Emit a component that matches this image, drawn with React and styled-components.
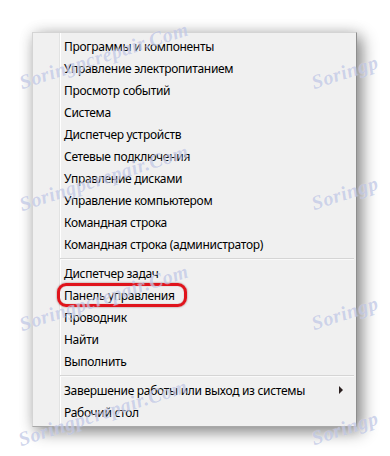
import React from 'react';
import styled, { createGlobalStyle } from 'styled-components';

const GlobalStyle = createGlobalStyle`
    html, body {
        margin: 0;
        padding: 0;
        background-color: #ffffff;
    }
`;

const Page = styled.div`
    position: relative;
    width: 390px;
    height: 456px;
    padding: 32px 0 0 32px;
    box-sizing: border-box;
    overflow: hidden;
    background-color: #ffffff;
`;

const Menu = styled.div`
    width: 325px;
    box-sizing: border-box;
    padding: 2px 0 3px;
    display: flex;
    flex-direction: column;
    border: 1px solid #d4d4d4;
    border-right-color: #8e8e8e;
    border-bottom-color: #a8a8a8;
    box-shadow: 5px 5px 15px rgba(0, 0, 0, 0.45), 0 0 14px rgba(0, 0, 0, 0.1);
    background: linear-gradient(
        to right,
        #f0f0f0 26px,
        #e2e3e3 26px,
        #e2e3e3 27px,
        #ffffff 27px,
        #ffffff 28px,
        #f0f0f0 28px
    );
    font-family: 'Noto Sans', 'Open Sans', sans-serif;
    font-size: 12px;
    letter-spacing: -0.3px;
    color: #000000;
`;

const Item = styled.div`
    position: relative;
    height: 22px;
    padding: 0 13px 0 31px;
    display: flex;
    align-items: center;
    white-space: nowrap;

    ${(props) =>
        props.highlighted &&
        `
        &::after {
            content: '';
            position: absolute;
            left: 24px;
            top: -1px;
            width: 130px;
            height: 24px;
            box-sizing: border-box;
            border: 3px solid #e0141c;
            border-radius: 9px;
            box-shadow: 0 0 2px rgba(80, 0, 0, 0.55), inset 0 0 1px rgba(80, 0, 0, 0.5);
        }
    `}
`;

const SubArrow = styled.span`
    margin-left: auto;
    width: 0;
    height: 0;
    border-top: 4px solid transparent;
    border-bottom: 4px solid transparent;
    border-left: 4px solid #2b2020;
`;

const Separator = styled.div`
    margin: 3px 2px 2px 27px;
    height: 1px;
    background-color: #d5d5d5;
    border-bottom: 1px solid #fafafa;
`;

const Watermark = styled.span`
    position: absolute;
    left: ${(props) => props.x}px;
    top: ${(props) => props.y - 20}px;
    line-height: 20px;
    font-family: 'Liberation Serif', serif;
    font-size: 20px;
    font-weight: bold;
    font-style: italic;
    letter-spacing: 0.5px;
    color: rgba(150, 162, 212, 0.45);
    text-shadow: 0 0 1px rgba(255, 255, 255, 0.6);
    transform: rotate(-18deg);
    transform-origin: 0 100%;
    white-space: nowrap;
    pointer-events: none;
`;

const groups = [
    ['Программы и компоненты', 'Управление электропитанием', 'Просмотр событий', 'Система', 'Диспетчер устройств', 'Сетевые подключения', 'Управление дисками', 'Управление компьютером', 'Командная строка', 'Командная строка (администратор)'],
    ['Диспетчер задач', 'Панель управления', 'Проводник', 'Найти', 'Выполнить'],
    ['Завершение работы или выход из системы', 'Рабочий стол'],
];

const marks = [
    { x: 23, y: 92, text: 'Soringpcrepair.Com' },
    { x: 23, y: 214, text: 'Soringpcrepair.Com' },
    { x: 23, y: 334, text: 'Soringpcrepair.Com' },
    { x: 22, y: 449, text: 'Soringpcrepair.Com' },
    { x: 315, y: 92, text: 'Soringp' },
    { x: 315, y: 213, text: 'Soringp' },
    { x: 315, y: 333, text: 'Soringp' },
    { x: 315, y: 448, text: 'Soringp' },
];

const App = () => {
    return (
        <Page>
            <GlobalStyle />
            <Menu>
                {groups.map((group, gi) => (
                    <React.Fragment key={gi}>
                        {gi > 0 && <Separator />}
                        {group.map((label) => (
                            <Item key={label} highlighted={label === 'Панель управления'}>
                                {label}
                                {label.startsWith('Завершение') && <SubArrow />}
                            </Item>
                        ))}
                    </React.Fragment>
                ))}
            </Menu>
            {marks.map((m, i) => (
                <Watermark key={i} x={m.x} y={m.y}>
                    {m.text}
                </Watermark>
            ))}
        </Page>
    );
};

export default App;
